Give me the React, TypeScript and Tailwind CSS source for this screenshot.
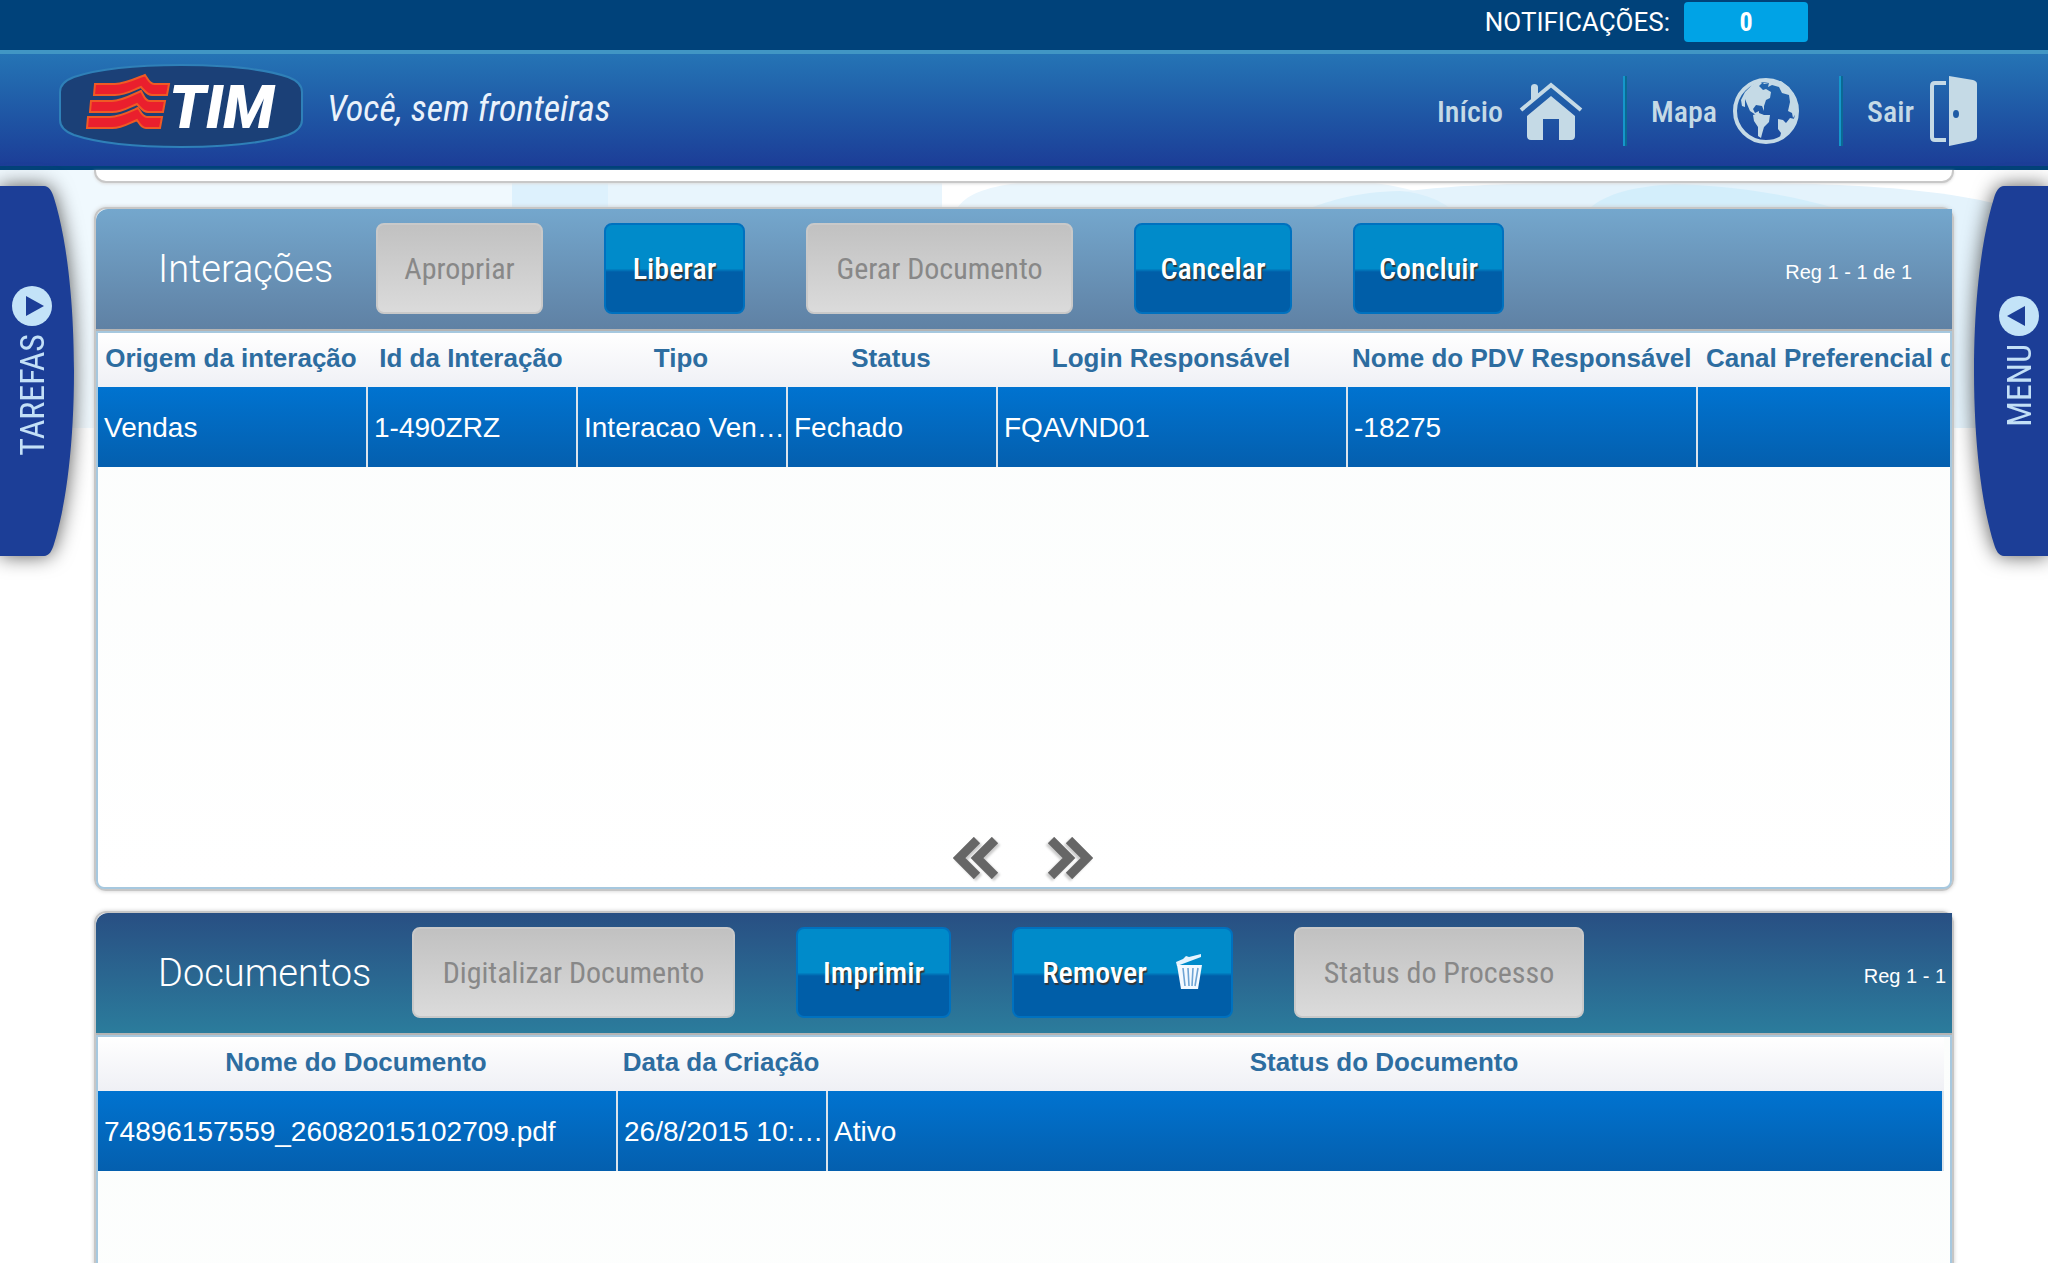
import type { ReactNode } from "react";
import clsx from "clsx";

interface Action {
  label: string;
  width: string;
  disabled?: boolean;
  icon?: ReactNode;
}

interface Column {
  label: string;
  width?: string;
  align?: string;
}

interface PanelProps {
  title: string;
  titleWidth: string;
  barClass: string;
  actions: Action[];
  counter: string;
  counterClass: string;
  columns: Column[];
  rows: string[][];
  tableClass: string;
  pager?: boolean;
}

const CONDENSED = "font-['Roboto_Condensed','Roboto',sans-serif]";

function TrashIcon() {
  return (
    <svg viewBox="0 0 28 36" className="h-9 w-7" fill="none" aria-hidden="true">
      <path d="M1 8 8 5l3-3 3 1 12-3v3L2 12Z" fill="#e4f4ff" />
      <path d="M2 11h25l-4 24H6Z" fill="#f3f9ff" />
      <path d="m8 14 2 18M13 14l1 18M18 14l-1 18M23 14l-3 18" stroke="#6fa4d4" strokeWidth="1.6" />
    </svg>
  );
}

const interactionActions: Action[] = [
  { label: "Apropriar", width: "w-[167px]", disabled: true },
  { label: "Liberar", width: "w-[141px]" },
  { label: "Gerar Documento", width: "w-[267px]", disabled: true },
  { label: "Cancelar", width: "w-[158px]" },
  { label: "Concluir", width: "w-[151px]" },
];

const documentActions: Action[] = [
  { label: "Digitalizar Documento", width: "w-[323px]", disabled: true },
  { label: "Imprimir", width: "w-[155px]" },
  { label: "Remover", width: "w-[221px]", icon: <TrashIcon /> },
  { label: "Status do Processo", width: "w-[290px]", disabled: true },
];

const interactionColumns: Column[] = [
  { label: "Origem da interação", width: "w-[270px]" },
  { label: "Id da Interação", width: "w-[210px]" },
  { label: "Tipo", width: "w-[210px]" },
  { label: "Status", width: "w-[210px]" },
  { label: "Login Responsável", width: "w-[350px]" },
  { label: "Nome do PDV Responsável", width: "w-[350px]" },
  { label: "Canal Preferencial do", width: "w-[350px]", align: "text-left" },
];

const documentColumns: Column[] = [
  { label: "Nome do Documento", width: "w-[520px]" },
  { label: "Data da Criação", width: "w-[210px]" },
  { label: "Status do Documento" },
];

function ActionButton({ label, width, disabled, icon }: Action) {
  return (
    <button
      type="button"
      disabled={disabled}
      className={clsx(
        "flex h-[91px] shrink-0 items-center justify-center gap-7 rounded-lg border-2 text-[30px] whitespace-nowrap",
        CONDENSED,
        width,
        disabled
          ? "border-[#c9c9c9] bg-linear-to-b from-[#c1c1c1] to-[#dbdbdb] text-[#888888]"
          : "border-[#0071bf] bg-linear-to-b from-[#008bca] from-50% to-[#005ea8] to-54% font-medium text-white [text-shadow:1px_2px_1px_#333]"
      )}
    >
      {label}
      {icon}
    </button>
  );
}

function Chevrons({ flip }: { flip?: boolean }) {
  return (
    <svg
      viewBox="0 0 46 42"
      className={clsx("h-[42px] w-[46px] drop-shadow-[2px_2px_1px_#ccc]", flip && "-scale-x-100")}
      fill="none"
      stroke="#666"
      strokeWidth="9"
      aria-hidden="true"
    >
      <path d="M24 3 6 21l18 18M42 3 24 21l18 18" />
    </svg>
  );
}

function DataTable({ columns, rows, className }: { columns: Column[]; rows: string[][]; className: string }) {
  return (
    <table className={clsx("table-fixed border-collapse", className)}>
      <thead>
        <tr className="h-[54px] bg-linear-to-b from-white to-[#eff0f5]">
          {columns.map((col) => (
            <th
              key={col.label}
              className={clsx(
                "pr-2 pb-1 text-[26px] leading-8 whitespace-nowrap text-[#2d6da0]",
                col.width,
                col.align ? `${col.align} pl-2` : "pl-1"
              )}
            >
              {col.label}
            </th>
          ))}
        </tr>
      </thead>
      <tbody>
        {rows.map((row) => (
          <tr key={row[0]} className="h-20 bg-linear-to-b from-[#0073d0] to-[#045fae]">
            {row.map((cell, i) => (
              <td
                key={i}
                className="truncate pt-0.5 pr-0.5 pl-1.5 text-[28px] text-white shadow-[inset_-2px_0_0_#dbe4ec,0_2px_0_#dcdde0]"
              >
                {cell}
              </td>
            ))}
          </tr>
        ))}
      </tbody>
    </table>
  );
}

function Panel(props: PanelProps) {
  return (
    <section className="relative rounded-xl border-2 border-[#c6c6c6] shadow-[0_0_4px_#ccc]">
      <div
        className={clsx(
          "flex h-[122px] items-center rounded-tl-xl border-b-2 border-[#b4b4b4] bg-linear-to-b pl-[62px]",
          props.barClass
        )}
      >
        <h2 className={clsx("shrink-0 font-['Roboto'] text-[38px] font-light text-white", props.titleWidth)}>
          {props.title}
        </h2>
        <div className="flex gap-[61px] pb-0.5">
          {props.actions.map((action) => (
            <ActionButton key={action.label} {...action} />
          ))}
        </div>
        <p className={clsx("ml-auto pt-1.5 text-xl whitespace-nowrap text-white", props.counterClass)}>
          {props.counter}
        </p>
      </div>
      <div className="flex min-h-[558px] flex-col overflow-hidden rounded-b-lg border-2 border-[#a6c8df] bg-linear-to-b from-[#fbfdfc] to-white">
        <DataTable columns={props.columns} rows={props.rows} className={props.tableClass} />
        {props.pager && (
          <div className="mt-auto flex justify-center gap-12 pr-0.5 pb-2">
            <button type="button" aria-label="Página anterior">
              <Chevrons />
            </button>
            <button type="button" aria-label="Próxima página">
              <Chevrons flip />
            </button>
          </div>
        )}
      </div>
    </section>
  );
}

function SideTab({ label, side }: { label: string; side: "left" | "right" }) {
  const isLeft = side === "left";
  return (
    <button
      type="button"
      className={clsx(
        "absolute top-[186px] z-10 flex h-[370px] w-[74px] flex-col items-center gap-2 text-[#c3e0f7]",
        isLeft ? "left-0 pt-[100px] pr-2.5" : "right-0 pt-[110px] pl-4"
      )}
    >
      <svg
        viewBox="0 0 74 370"
        className={clsx(
          "absolute inset-0 -z-10 h-full w-full overflow-visible drop-shadow-[0_0_10px_#555]",
          !isLeft && "-scale-x-100"
        )}
        aria-hidden="true"
      >
        <path d="M0 0h44c5 0 8 5 10 12 12 38 20 100 20 173s-8 135-20 173c-2 7-5 12-10 12H0Z" fill="#1c3e97" />
      </svg>
      <svg viewBox="0 0 40 40" className={clsx("size-10 shrink-0", !isLeft && "-scale-x-100")} aria-hidden="true">
        <circle cx="20" cy="20" r="20" fill="#c3e3f8" />
        <path d="M14 10v20l18-10Z" fill="#1c3e97" />
      </svg>
      <span className={clsx("rotate-180 text-[34px] leading-9 [writing-mode:vertical-rl]", CONDENSED)}>
        {label}
      </span>
    </button>
  );
}

function Logo() {
  return (
    <div className="relative h-[84px] w-[244px]">
      <svg viewBox="0 0 244 84" className="absolute inset-0 h-full w-full" aria-hidden="true">
        <path
          d="M1 28c0-8 6-12 14-15C42 4 80 1 122 1s80 3 107 12c8 3 14 7 14 15v28c0 8-6 12-14 15-27 9-65 12-107 12S42 80 15 71C7 68 1 64 1 56Z"
          fill="#1b4077"
          stroke="#2f80b8"
          strokeWidth="2"
        />
        <g fill="#ea1f2d" stroke="#ef5a24" strokeWidth="2">
          <path d="M36 20h20c9 0 20-5 30-9 3 4 4 9 9 9h15l-2 11H93c-5 0-7-4-11-8-8 3-15 8-26 8H35Z" />
          <path d="M32 37h21c9 0 20-6 29-10 3 5 4 10 9 10h15l-2 11H89c-5 0-7-4-11-8-8 3-14 8-25 8H31Z" />
          <path d="M29 53h22c9 0 19-5 28-9 3 4 4 9 9 9h15l-2 11H87c-5 0-6-4-9-8-8 3-14 8-25 8H28Z" />
        </g>
      </svg>
      <span className="absolute top-3.5 left-[110px] font-['Roboto'] text-[60px] leading-[60px] font-black text-white italic">
        TIM
      </span>
    </div>
  );
}

function HouseIcon() {
  return (
    <svg viewBox="0 0 64 58" className="h-[58px] w-16" aria-hidden="true">
      <path d="M12 19V5c0-4 7-4 7 0v8" fill="#c5dae6" />
      <path d="M2 28 32 3l30 25" fill="none" stroke="#c5dae6" strokeWidth="4" />
      <path d="M32 14 8 34v20c0 2 1 4 4 4h12V37h16v21h12c3 0 4-2 4-4V34Z" fill="#c5dae6" />
    </svg>
  );
}

function GlobeIcon() {
  return (
    <svg viewBox="0 0 66 66" className="size-[66px]" fill="#c5dae6" aria-hidden="true">
      <circle cx="33" cy="33" r="31" fill="none" stroke="#c5dae6" strokeWidth="4" />
      <path d="m8 22 4-8 7-7 7-4 3 2-3 3 4 4 3-1 5 3-1 6-4 2-2 6v5l-2-5-6-1-3 4 2 4 4-2v3l4 1 3 2-4-1-6-1-6-4-3-7-2-5v8l-3-1Z" />
      <path d="m20 37 6-2 5 2h6l-1 7-5 5-2 7-1 4-3-2V49l-4-6Z" />
      <path d="m45 41 5 1 3 3 4-5 5 1-2 9-8 8-5 1 1-4-3-4Z" />
      <path d="m30 5 6-1 12-1 8 6 7 11 2 12-5 8-1-5-4-2 2-9-1-7-7-2-3-6-7-2-4 2 1-4-5 1Z" />
    </svg>
  );
}

function DoorIcon() {
  return (
    <svg viewBox="0 0 47 70" className="h-[70px] w-[47px]" aria-hidden="true">
      <path d="M16 7H5c-2 0-3 1-3 3v51c0 2 1 3 3 3h11" fill="none" stroke="#c5dae6" strokeWidth="4" />
      <path d="m19 0 24 4c3 1 4 2 4 4v53c0 2-1 3-4 4l-24 5Z" fill="#c5dae6" />
      <ellipse cx="26" cy="38" rx="3" ry="4" fill="#1f5ba5" />
    </svg>
  );
}

function NavLink({ label, children }: { label: string; children: ReactNode }) {
  return (
    <a href="#" className={clsx("flex items-center gap-4 text-[30px] font-medium text-[#c5dae6]", CONDENSED)}>
      {label}
      {children}
    </a>
  );
}

function NavDivider() {
  return <span className="mr-6 ml-10 h-[70px] w-1 border-r-2 border-l-2 border-r-[#0a6a94] border-l-[#1597cb]" />;
}

function Backdrop() {
  return (
    <svg
      viewBox="0 0 2048 258"
      preserveAspectRatio="none"
      className="absolute inset-x-0 top-[170px] -z-10 h-[258px] w-full"
      aria-hidden="true"
    >
      <path d="M0 0h942v258H0Z" fill="#f0f9fe" />
      <path d="M608 0h334v258H608Z" fill="#e8f5fd" />
      <path d="M512 0h96v258h-96Z" fill="#ddf1fd" />
      <path d="M957 38c10-14 30-22 70-26h340c40 5 65 12 83 26v220H957Z" fill="#eaf6fd" />
      <path d="M1400 22c60-8 140-10 270-10 150 0 240 4 310 18 40 9 68 18 68 24v204h-648Z" fill="#e4f3fc" />
      <path d="M1310 38c20-7 45-16 90-17 25 2 40 10 50 17v60h-140Z" fill="#d8effb" />
      <path d="M1590 38c15-14 45-22 85-24 60 2 110 10 160 24v60h-245Z" fill="#d3eefb" />
    </svg>
  );
}

export default function App() {
  return (
    <div className="relative isolate h-screen overflow-hidden bg-white font-['Liberation_Sans',Arial,sans-serif]">
      <Backdrop />

      <div className="flex h-[50px] items-start justify-end gap-3.5 bg-[#00427a] pt-0.5 pr-60 font-['Roboto'] text-[26px] text-white">
        <span className="leading-10">NOTIFICAÇÕES:</span>
        <span className={clsx("w-[124px] rounded-sm bg-[#00a3e6] text-center leading-10 font-bold", CONDENSED)}>0</span>
      </div>

      <header className="flex h-[120px] items-center border-t-4 border-b-4 border-t-[#4196c4] border-b-[#00427a] bg-linear-to-b from-[#2574b5] to-[#1c3d97] pr-[71px] pl-[59px]">
        <div className="flex items-center pb-2">
          <Logo />
          <p className={clsx("pt-1.5 pl-6 text-[36px] text-[#eaf2fb] italic", CONDENSED)}>Você, sem fronteiras</p>
        </div>
        <nav className="ml-auto flex items-center pt-0.5">
          <NavLink label="Início">
            <HouseIcon />
          </NavLink>
          <NavDivider />
          <NavLink label="Mapa">
            <GlobeIcon />
          </NavLink>
          <NavDivider />
          <NavLink label="Sair">
            <DoorIcon />
          </NavLink>
        </nav>
      </header>

      <SideTab label="TAREFAS" side="left" />
      <SideTab label="MENU" side="right" />

      <main className="flex flex-col px-[94px]">
        <div className="mb-6 h-[13px] rounded-b-xl border-2 border-t-0 border-[#c8c8c8] bg-white shadow-[0_1px_3px_#ddd]" />
        <div className="flex flex-col gap-5">
          <Panel
            title="Interações"
            titleWidth="w-[218px]"
            barClass="from-[#74a7cd] to-[#5f81a4]"
            actions={interactionActions}
            counter="Reg 1 - 1 de 1"
            counterClass="pr-10"
            columns={interactionColumns}
            rows={[["Vendas", "1-490ZRZ", "Interacao Ven…", "Fechado", "FQAVND01", "-18275", ""]]}
            tableClass="w-[1950px]"
            pager
          />
          <Panel
            title="Documentos"
            titleWidth="w-[254px]"
            barClass="from-[#284f83] to-[#2b7c9c]"
            actions={documentActions}
            counter="Reg 1 - 1"
            counterClass="pr-1.5"
            columns={documentColumns}
            rows={[["74896157559_26082015102709.pdf", "26/8/2015 10:…", "Ativo"]]}
            tableClass="w-[calc(100%-6px)]"
          />
        </div>
      </main>
    </div>
  );
}
